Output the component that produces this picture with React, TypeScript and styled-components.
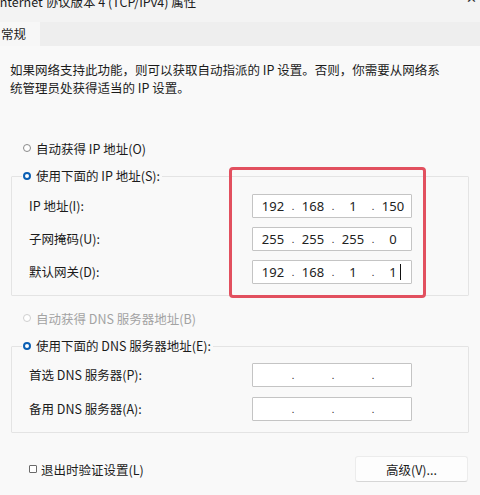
import styled, { createGlobalStyle } from "styled-components";

const GlobalStyle = createGlobalStyle`
  html, body {
    margin: 0;
    padding: 0;
    background: #f9f9f9;
  }
  body {
    font-family: "Noto Sans CJK SC", "Noto Sans", sans-serif;
    font-size: 12.5px;
    color: #1b1b1b;
  }
`;

const Window = styled.div`
  position: relative;
  width: 480px;
  height: 495px;
  overflow: hidden;
  background: #f9f9f9;
`;

const TitleBar = styled.div`
  height: 22px;
  display: flex;
  justify-content: space-between;
  align-items: flex-start;
  background: #f3f3f3;
`;

const Title = styled.div`
  margin: -7px 0 0 -4px;
  line-height: 18px;
  white-space: nowrap;
`;

const Close = styled.div`
  margin: -10px 3px 0 0;
  font-size: 13px;
  line-height: 16px;
  color: #333;
`;

const TabStrip = styled.div`
  height: 24px;
  display: flex;
  background: #eeeeee;
`;

const Tab = styled.div`
  width: 39px;
  padding-left: 1px;
  line-height: 24px;
  background: #f7f7f7;
`;

const Body = styled.div`
  padding: 0 11px;
`;

const Intro = styled.p`
  margin: 15px 0 0 -1px;
  line-height: 18px;
`;

const RadioRow = styled.label<{ $top?: number; $disabled?: boolean }>`
  display: flex;
  align-items: center;
  height: 18px;
  margin-top: ${(p) => p.$top ?? 0}px;
  padding-left: 12px;
  color: ${(p) => (p.$disabled ? "#a3a3a3" : "inherit")};
`;

const RadioDot = styled.span<{ $checked?: boolean; $disabled?: boolean }>`
  box-sizing: border-box;
  width: 8px;
  height: 8px;
  margin-right: 5px;
  border-radius: 50%;
  background: #fff;
  border: ${(p) =>
    p.$checked
      ? "2.5px solid #0a5fb4"
      : `1px solid ${p.$disabled ? "#cfcfcf" : "#8a8a8a"}`};
`;

const Group = styled.fieldset<{ $top: number; $bottom: number }>`
  margin: 10px 0 0;
  padding: ${(p) => `${p.$top}px 0 ${p.$bottom}px 17px`};
  border: 1px solid #e4e4e4;
  border-radius: 1px;
  min-width: 0;
`;

/* legend sits on the top border, pulled back over the group's left padding */
const Legend = styled.legend`
  margin-left: -7px;
  padding: 0 2px 0 1px;
  height: 18px;
  line-height: 18px;
  display: flex;
  align-items: center;
`;

const Rows = styled.div<{ $gap: number }>`
  display: grid;
  grid-template-columns: 223px 160px;
  row-gap: ${(p) => p.$gap}px;
  align-items: center;
`;

const FieldLabel = styled.span`
  line-height: 18px;
`;

const IpBox = styled.div`
  box-sizing: border-box;
  height: 24px;
  display: flex;
  align-items: center;
  padding-left: 2px;
  background: #fff;
  border: 1px solid #c4c4c4;
  border-radius: 1px;
`;

const Octet = styled.span`
  width: 36px;
  text-align: center;
  font-family: "Noto Sans", "Liberation Sans", sans-serif;
  font-size: 13px;
  color: #222;
`;

const Dot = styled.span`
  width: 4px;
  text-align: center;
  font-family: "Liberation Sans", sans-serif;
  font-size: 11px;
  color: #333;
`;

const Caret = styled.span`
  display: inline-block;
  width: 1px;
  height: 16px;
  margin-left: 3px;
  margin-right: -4px;
  vertical-align: -3px;
  background: #111;
`;

const Highlight = styled.div`
  position: absolute;
  left: 229px;
  top: 167px;
  width: 197px;
  height: 131px;
  box-sizing: border-box;
  border: 3px solid #e2505f;
  border-radius: 4px;
  pointer-events: none;
`;

const Footer = styled.div`
  margin-top: 23px;
  display: flex;
  justify-content: space-between;
  align-items: center;
`;

const CheckRow = styled.label`
  display: flex;
  align-items: center;
  padding-left: 18px;
`;

const CheckBox = styled.span`
  box-sizing: border-box;
  width: 8px;
  height: 8px;
  margin-right: 4px;
  border: 1px solid #6a6a6a;
  border-radius: 1px;
  background: #fff;
`;

const Button = styled.button`
  width: 113px;
  height: 26px;
  margin-right: 1px;
  font: inherit;
  color: #1b1b1b;
  background: #fdfdfd;
  border: 1px solid #ececec;
  border-bottom-color: #d6d6d6;
  border-radius: 3px;
`;

type Address = string[];

function IpField({ value, caret }: { value?: Address; caret?: boolean }) {
  const parts = value ?? ["", "", "", ""];
  return (
    <IpBox>
      {parts.map((part, i) => [
        <Octet key={`o${i}`}>
          {part}
          {caret && i === 3 && <Caret />}
        </Octet>,
        i < 3 && <Dot key={`d${i}`}>.</Dot>,
      ])}
    </IpBox>
  );
}

export default function App() {
  return (
    <>
      <GlobalStyle />
      <Window>
        <TitleBar>
          <Title>Internet 协议版本 4 (TCP/IPv4) 属性</Title>
          <Close>✕</Close>
        </TitleBar>
        <TabStrip>
          <Tab>常规</Tab>
        </TabStrip>
        <Body>
          <Intro>
            如果网络支持此功能，则可以获取自动指派的 IP 设置。否则，你需要从网络系
            <br />
            统管理员处获得适当的 IP 设置。
          </Intro>

          <RadioRow $top={42}>
            <RadioDot />
            自动获得 IP 地址(O)
          </RadioRow>
          <Group $top={9} $bottom={11}>
            <Legend>
              <RadioDot $checked />
              使用下面的 IP 地址(S):
            </Legend>
            <Rows $gap={9}>
              <FieldLabel>IP 地址(I):</FieldLabel>
              <IpField value={["192", "168", "1", "150"]} />
              <FieldLabel>子网掩码(U):</FieldLabel>
              <IpField value={["255", "255", "255", "0"]} />
              <FieldLabel>默认网关(D):</FieldLabel>
              <IpField value={["192", "168", "1", "1"]} caret />
            </Rows>
          </Group>

          <RadioRow $top={13} $disabled>
            <RadioDot $disabled />
            自动获得 DNS 服务器地址(B)
          </RadioRow>
          <Group $top={8} $bottom={11}>
            <Legend>
              <RadioDot $checked />
              使用下面的 DNS 服务器地址(E):
            </Legend>
            <Rows $gap={10}>
              <FieldLabel>首选 DNS 服务器(P):</FieldLabel>
              <IpField />
              <FieldLabel>备用 DNS 服务器(A):</FieldLabel>
              <IpField />
            </Rows>
          </Group>

          <Footer>
            <CheckRow>
              <CheckBox />
              退出时验证设置(L)
            </CheckRow>
            <Button>高级(V)...</Button>
          </Footer>
        </Body>
        <Highlight />
      </Window>
    </>
  );
}
